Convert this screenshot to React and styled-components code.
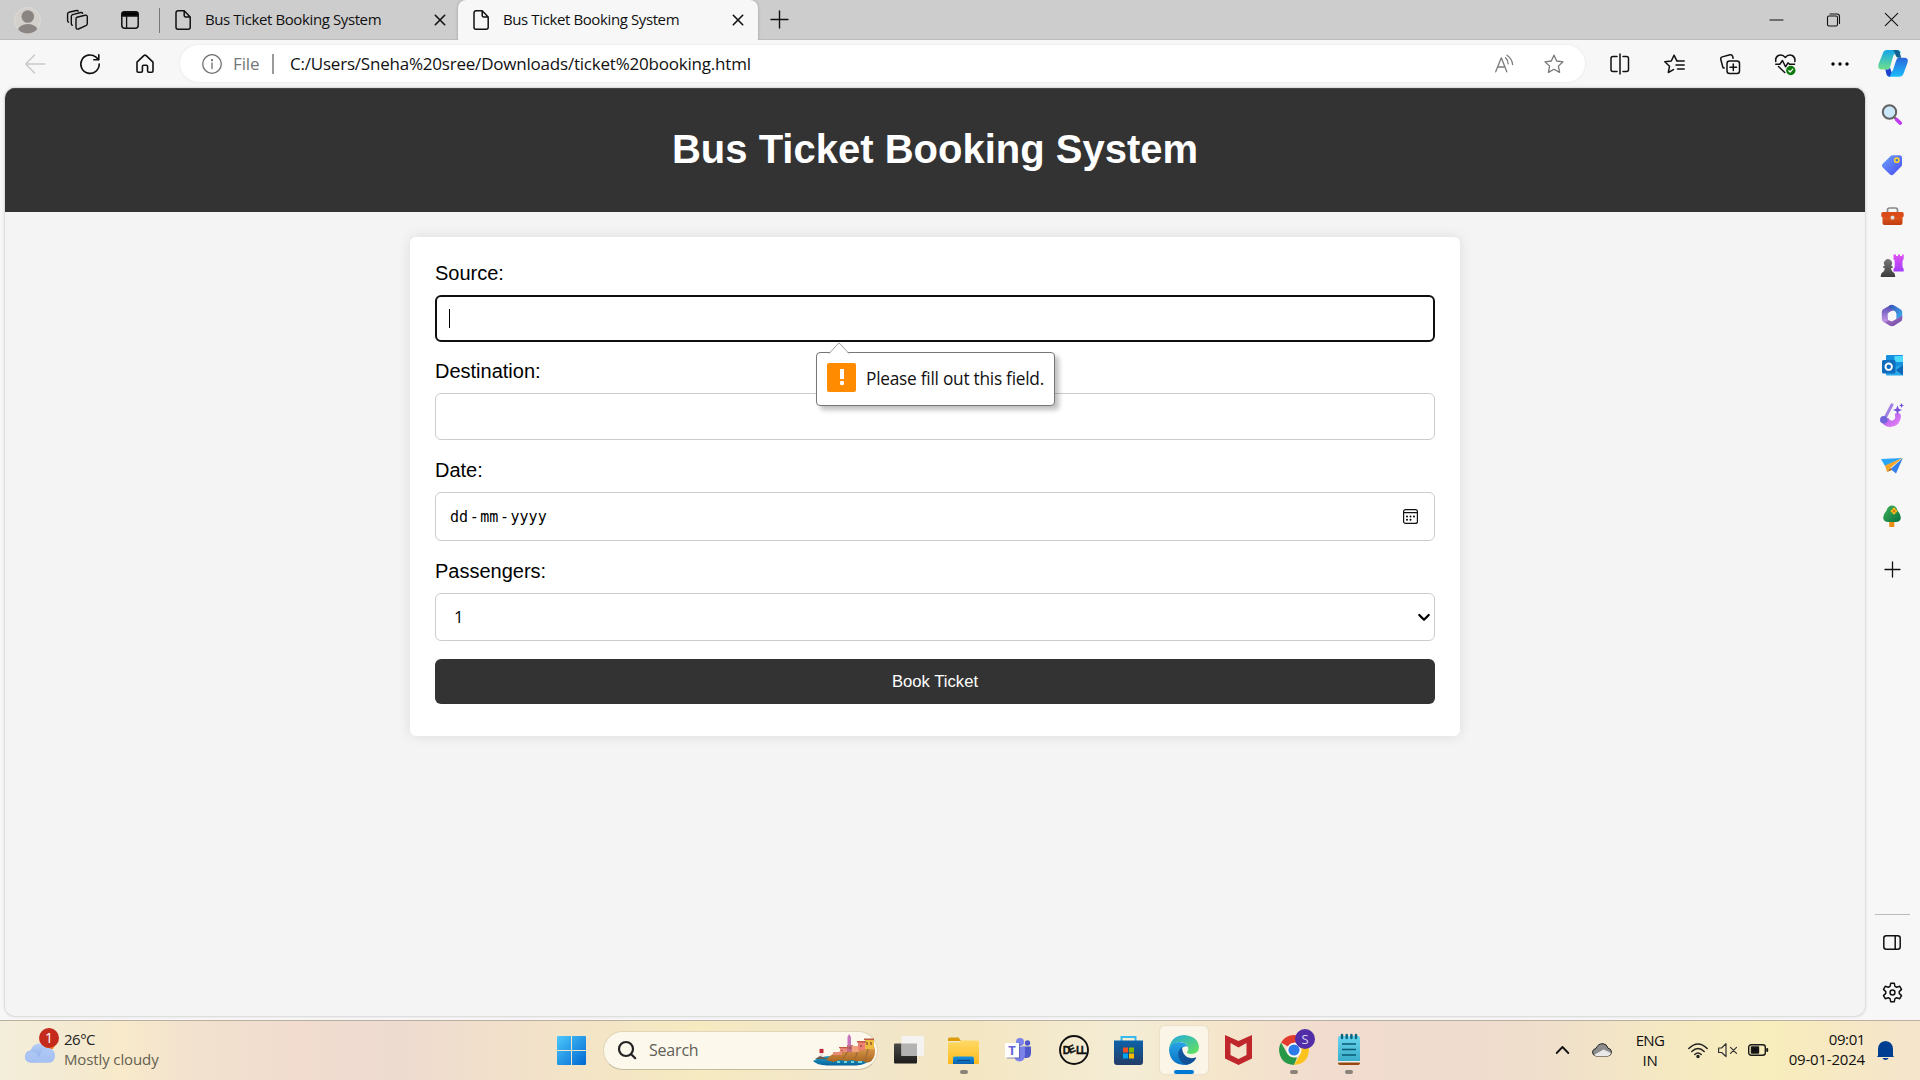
import React from "react";
import styled, { createGlobalStyle } from "styled-components";

const ui = `"Open Sans", "Noto Sans", sans-serif`;
const page = `"Liberation Sans", Arial, sans-serif`;

const Global = createGlobalStyle`
  * { box-sizing: border-box; }
  body { margin: 0; background: #f7f7f7; overflow: hidden; }
  svg { display: block; flex: none; overflow: visible; }
`;

const Screen = styled.div`
  width: 1920px;
  height: 1080px;
  display: flex;
  flex-direction: column;
  background: #f7f7f7;
  font-family: ${ui};
  color: #111;
`;

const Text = styled.span`
  white-space: nowrap;
  font-size: ${(p) => p.$size || 15}px;
  letter-spacing: ${(p) => p.$track || 0}px;
  color: ${(p) => p.$color || "inherit"};
  line-height: 20px;
`;

/* Tab strip */
const TabStrip = styled.div`
  height: 40px;
  display: flex;
  align-items: stretch;
  background: #cdcdcd;
  box-shadow: inset 0 -1px 0 #bdbdbd;
`;
const Cell = styled.div`
  width: ${(p) => p.$w}px;
  flex: none;
  display: flex;
  align-items: center;
  justify-content: center;
`;
const Divider = styled.div`
  width: ${(p) => p.$w || 1}px;
  height: ${(p) => p.$h}px;
  align-self: center;
  flex: none;
  background: ${(p) => p.$color || "#777"};
`;
const Tab = styled.div`
  width: ${(p) => p.$w}px;
  display: flex;
  align-items: center;
  padding: 0 ${(p) => p.$pr}px 1px 15px;
  border-radius: ${(p) => (p.$active ? "8px 8px 0 0" : "0")};
  background: ${(p) => (p.$active ? "#f7f7f7" : "transparent")};
  box-shadow: ${(p) => (p.$active ? "0 0 3px rgba(0,0,0,.25)" : "none")};
  clip-path: inset(0 -4px 0 -4px);
`;
const TabTitle = styled(Text)`
  flex: 1;
  margin-left: 14px;
  padding-bottom: 1px;
`;
const Spacer = styled.div`
  flex: 1;
`;

/* Toolbar */
const Toolbar = styled.div`
  height: 48px;
  display: flex;
  align-items: center;
  padding: 0 0 1px 7px;
`;
const AddressBar = styled.div`
  width: 1405px;
  height: 37px;
  margin: 0 7px 0 8px;
  padding: 0 6px 0 22px;
  display: flex;
  align-items: center;
  border-radius: 19px;
  background: #fff;
  box-shadow: 0 0 3px rgba(0, 0, 0, 0.08);
`;
const Scheme = styled.div`
  width: 50px;
  padding-left: 11px;
`;
const Url = styled(Text)`
  margin-left: 16px;
`;

/* Content */
const Middle = styled.div`
  height: 932px;
  display: flex;
  padding-left: 5px;
`;
const Viewport = styled.div`
  width: 1860px;
  height: 928px;
  border-radius: 10px;
  overflow: hidden;
  background: #f4f4f4;
  box-shadow: 0 0 2px 1px #d6d6d6;
  font-family: ${page};
`;
const Header = styled.header`
  height: 124px;
  display: flex;
  align-items: center;
  justify-content: center;
  background: #333;
  border-top: 1px solid #444;
`;
const Heading = styled.h1`
  margin: 0;
  padding-bottom: 4px;
  font-size: 40px;
  line-height: 46px;
  color: #fff;
`;
const Form = styled.form`
  width: 1050px;
  height: 499px;
  margin: 25px auto 0;
  padding: 25px;
  border-radius: 6px;
  background: #fff;
  box-shadow: 0 0 12.5px rgba(0, 0, 0, 0.1);
`;
const Group = styled.div`
  position: relative;
  margin-bottom: ${(p) => p.$mb}px;
`;
const Label = styled.label`
  display: block;
  height: 23px;
  margin-bottom: 10px;
  font-size: 20px;
  line-height: 23px;
  color: #000;
`;
const Field = styled.div`
  height: ${(p) => p.$h || 47}px;
  display: flex;
  align-items: center;
  border: ${(p) => (p.$focus ? "2px solid #101010" : "1px solid #ccc")};
  border-radius: 6px;
  padding: 0 ${(p) => p.$pr || 14}px 0 ${(p) => p.$pl || 13}px;
  justify-content: ${(p) => (p.$between ? "space-between" : "flex-start")};
  color: #000;
`;
const Caret = styled.div`
  width: 1px;
  height: 19px;
  margin-left: -1px;
  background: #000;
`;
const DateParts = styled.div`
  display: flex;
  gap: 1.6px;
  font: 15px/20px "DejaVu Sans Mono", monospace;
`;
const OptionText = styled(Text)`
  padding-bottom: 1px;
  font-family: ${ui};
`;
const Submit = styled.div`
  height: 45px;
  display: flex;
  align-items: center;
  justify-content: center;
  padding-top: 1px;
  border-radius: 6px;
  background: #333;
  color: #fff;
  font-size: 16.67px;
`;
const Bubble = styled.div`
  position: absolute;
  z-index: 2;
  left: 381px;
  top: 90px;
  width: 239px;
  height: 54px;
  display: flex;
  align-items: center;
  padding-left: 10px;
  background: #fff;
  border: 1px solid #767676;
  border-radius: 4px;
  box-shadow: 4px 4px 5px rgba(0, 0, 0, 0.25);
  font-family: ${ui};
`;
const BubbleTip = styled.svg`
  position: absolute;
  left: 12px;
  top: -11px;
`;
const Alert = styled.div`
  width: 29px;
  height: 29px;
  margin: -3px 10px 0 0;
  display: flex;
  align-items: center;
  justify-content: center;
  border-radius: 2px;
  background: #ff8c00;
`;

/* Sidebar */
const Sidebar = styled.aside`
  width: 55px;
  padding: 2px 1px 3px 0;
  display: flex;
  flex-direction: column;
  align-items: center;
`;
const SideCell = styled.div`
  width: 50px;
  height: ${(p) => p.$h || 50}px;
  padding-top: ${(p) => p.$pt || 0}px;
  flex: none;
  display: flex;
  align-items: center;
  justify-content: center;
`;
const SideRule = styled.div`
  width: 35px;
  height: 1px;
  margin-bottom: 2px;
  background: #bbb;
`;

/* Taskbar */
const Taskbar = styled.footer`
  height: 60px;
  display: flex;
  align-items: stretch;
  padding-bottom: 1px;
  border-top: 1px solid #b9afa2;
  background: linear-gradient(90deg, #f3eeda 0, #f4ead2 70px, #f8eaca 120px, #f2e2ce 185px, #f1dccf 300px, #eedbd0 400px, #f2e0cb 500px, #f5eac0 700px, #f2e6cc 850px, #f3e6c2 970px, #f4ecd5 1130px, #f5e6cb 1220px, #f1dccf 1320px, #f0dbcf 1450px, #efdfcb 1550px, #f5e9c2 1670px, #f8edbc 1770px, #f5e5ca 1900px);
`;
const Weather = styled.div`
  width: 543px;
  display: flex;
  padding-left: 25px;
`;
const Stack = styled.div`
  display: flex;
  flex-direction: column;
  justify-content: center;
  align-items: ${(p) => p.$align || "flex-start"};
  width: ${(p) => (p.$w ? p.$w + "px" : "auto")};
  margin-left: ${(p) => p.$ml || 0}px;
  padding-bottom: ${(p) => p.$pb || 0}px;
`;
const SearchBox = styled.div`
  width: 275px;
  height: 39px;
  align-self: center;
  margin: 0 3px;
  padding: 0 2px 0 14px;
  display: flex;
  align-items: center;
  gap: 13px;
  border-radius: 20px;
  background: #fcf8ec;
  border: 1px solid #e0d6b8;
  border-bottom-color: #c6bb9c;
`;
const TaskButton = styled.div`
  width: 55px;
  height: 58px;
  flex: none;
  position: relative;
  display: flex;
  align-items: center;
  justify-content: center;
`;
const Tile = styled.div`
  width: 48px;
  height: 48px;
  display: flex;
  align-items: center;
  justify-content: center;
  border-radius: 5px;
  background: #fbf5e8;
  box-shadow: 0 0 1px 1px #eadfca;
`;
const Running = styled.div`
  position: absolute;
  bottom: 5px;
  left: 50%;
  width: ${(p) => (p.$active ? 20 : 8)}px;
  height: 4px;
  transform: translateX(-50%);
  border-radius: 2px;
  background: ${(p) => (p.$active ? "#0078d4" : "#8b8378")};
`;
const Bell = styled(Cell)`
  margin-right: 15px;
`;

const Line = ({ w = 20, h = w, box, c = "#111", s = 1.5, children }) => (
  <svg width={w} height={h} viewBox={box || `0 0 ${w} ${h}`} fill="none" stroke={c} strokeWidth={s} strokeLinecap="round" strokeLinejoin="round">
    {children}
  </svg>
);
const Art = ({ w = 24, h = w, children }) => (
  <svg width={w} height={h} viewBox={`0 0 ${w} ${h}`}>{children}</svg>
);
const Grad = ({ id, a, b, v }) => (
  <linearGradient id={id} x1="0" y1="0" x2={v ? 0 : 1} y2="1">
    <stop offset="0" stopColor={a} />
    <stop offset="1" stopColor={b} />
  </linearGradient>
);

const FileIcon = () => (
  <Line w={16} h={20}>
    <path d="M3 .8h6.2L15.2 7v10.2a2 2 0 0 1-2 2H3a2 2 0 0 1-2-2V2.8a2 2 0 0 1 2-2zM9.2.8v4.7a1.5 1.5 0 0 0 1.500 1.500h4.500" />
  </Line>
);
const CloseIcon = () => (
  <Line w={10} s={1.6}><path d="m.3.3 9.400 9.400M9.700.3.3 9.700" /></Line>
);
const starPath = "M10 1.200 12.700 7l6.300.8-4.600 4.300 1.200 6.300L10 15.300l-5.600 3.100 1.200-6.300L1 7.800 7.300 7z";

function Tabs() {
  return (
    <TabStrip>
      <Cell $w={55}>
        <Art w={27}>
          <clipPath id="av"><circle cx="13.500" cy="13.500" r="13" /></clipPath>
          <circle cx="13.500" cy="13.500" r="13" fill="#d3d0cc" stroke="#dedbd7" />
          <circle cx="13.800" cy="9.500" r="6.300" fill="#8a8582" />
          <ellipse cx="13.800" cy="23.500" rx="10" ry="6.500" fill="#8a8582" clipPath="url(#av)" />
        </Art>
      </Cell>
      <Cell $w={45}>
        <Line w={21} h={20} s={1.4}>
          <path d="M10 7.200 18 5.200q2-.4 2.300 1.400v7.200q0 1.400-1.400 1.900l-7.500 3.300q-2.200.6-2.400-1.500V9q0-1.500 1-1.800z" />
          <path d="M5.300 15.200q-1-.2-1-1.500V6.500q0-1.400 1.300-1.900L13.800 2.500q1.500-.2 1.800.8M1.500 12.200q-.9-.4-.9-1.500V4q0-1.300 1.200-1.700L9.500.5q1.300-.2 1.700.6" />
        </Line>
      </Cell>
      <Cell $w={59}>
        <Line w={18}>
          <rect x=".8" y=".8" width="16.400" height="16.400" rx="3" />
          <path d="M1 3q0-2 2-2h12q2 0 2 2v2H1z" fill="#000" />
          <path d="M5.600 5.500V17" strokeWidth="1.300" />
        </Line>
      </Cell>
      <Divider $h={25} />
      <Tab $w={298} $pr={13}>
        <FileIcon />
        <TabTitle $track={-0.39}>Bus Ticket Booking System</TabTitle>
        <CloseIcon />
      </Tab>
      <Tab $w={300} $pr={15} $active>
        <FileIcon />
        <TabTitle $track={-0.39}>Bus Ticket Booking System</TabTitle>
        <CloseIcon />
      </Tab>
      <Cell $w={42}><Line w={17} h={18} s={1.4}><path d="M8.500 0v17M0 8.500h17" /></Line></Cell>
      <Spacer />
      <Cell $w={57}><Line w={13} s={1.2}><path d="M0 6h13" /></Line></Cell>
      <Cell $w={57}>
        <Line w={13} s={1.1}>
          <rect x=".5" y="2" width="10" height="10" rx="1.500" />
          <path d="M3 0h7q2.500 0 2.500 2.500v7" />
        </Line>
      </Cell>
      <Cell $w={58}><Line w={13} h={14} s={1.1}><path d="m.3.3 12.400 12.400M12.700.3.3 12.700" /></Line></Cell>
    </TabStrip>
  );
}

function Tools() {
  return (
    <Toolbar>
      <Cell $w={55}><Line w={20} c="#cacaca"><path d="M20 10H.8M9.500 1 .8 10l8.700 9" /></Line></Cell>
      <Cell $w={55}><Line w={20} s={1.600}><path d="M19.200 10A9.200 9.200 0 1 1 16 3.200L18.800 5.800M18.800.8v5h-5" /></Line></Cell>
      <Cell $w={55}><Line w={18} h={19} s={1.600}><path d="M1 8.200 7.800 1.700q1.200-1 2.400 0L17 8.200V17q0 1.200-1.200 1.200h-3q-1.200 0-1.200-1.200v-4.500q0-1.200-1.200-1.200H7.600q-1.200 0-1.200 1.200V17q0 1.200-1.200 1.200h-3Q1 18.200 1 17z" /></Line></Cell>
      <AddressBar>
        <Line w={20} c="#6e6e6e" s={1.3}>
          <circle cx="10" cy="10" r="9.300" /><path d="M10 9v5.500" /><circle cx="10" cy="6.200" r=".5" fill="#6e6e6e" />
        </Line>
        <Scheme><Text $size={17} $track={-0.1} $color="#767676">File</Text></Scheme>
        <Divider $w={2} $h={20} $color="#9a9a9a" />
        <Url $size={17} $track={-0.21}>C:/Users/Sneha%20sree/Downloads/ticket%20booking.html</Url>
        <Spacer />
        <Cell $w={50}>
          <Line w={19} h={18} c="#7b7b7b" s={1.3}>
            <path d="M.7 16.800 6.300 2.800l5.500 14M2.700 12h7.200M10.500 2.800q2.600 2.300 2.600 6M12 .2q5 3.500 5.600 9.300" />
          </Line>
        </Cell>
        <Cell $w={50}><Line w={20} c="#777" s={1.3}><path d={starPath} /></Line></Cell>
      </AddressBar>
      <Cell $w={55}>
        <Line w={20}>
          <path d="M7 2.500H3q-2 0-2 2v11q0 2 2 2h4M13 2.500h3.500q2 0 2 2v11q0 2-2 2H13M10 0v20" />
        </Line>
      </Cell>
      <Cell $w={55}>
        <Line w={21} h={20}>
          <path d="M13 7.200 10 1.200 7.300 7 .8 7.800l4.700 4.500-1.200 6.200L9.500 15.600M13.500 7h6.700M12 11h8.200M13.500 15h6.700" />
        </Line>
      </Cell>
      <Cell $w={55}>
        <Line w={20}>
          <rect x="7" y="7" width="12.500" height="12.500" rx="2.500" />
          <path d="M13.300 10v6.500M10 13.300h6.500M4.200 14 3 13.700 .8 5.500q-.5-2 1.500-2.600L10 .8q2-.5 2.600 1.400l.5 2" />
        </Line>
      </Cell>
      <Cell $w={56}>
        <Line w={21} h={20}>
          <path d="M.8 7.500q-.8-4 2.500-6 4.200-1.500 7 2 2.800-3.500 7-2 3.300 2 2.500 6M.8 10.300h4l2.700-3.800 3 6.300 2.500-4 1.500 1.500h5M3.500 12.500l6.200 6" />
          <circle cx="15.800" cy="16.500" r="4.700" fill="#0e7a0d" stroke="none" />
          <path d="m13.800 16.700 1.400 1.300 2.600-2.800" stroke="#fff" strokeWidth="1.200" />
        </Line>
      </Cell>
      <Cell $w={54}><Art w={18} h={4}><circle cx="2" cy="2" r="1.700" /><circle cx="9" cy="2" r="1.700" /><circle cx="16" cy="2" r="1.700" /></Art></Cell>
      <Cell $w={51}>
        <Art w={30} h={27}>
          <Grad id="c1" a="#13a6ea" b="#6ee08a" v />
          <Grad id="c2" a="#2a66dc" b="#1bbdf9" v />
          <path d="M19 0H9Q6 0 5 3L.6 14Q-1 19.500 4 19.500H9q2.500 0 3.200-3L15.300 6q1-3 5-3h2.500Q22.500 0 19 0z" fill="url(#c1)" />
          <path d="M11.500 26.700H21q3.500 0 4.500-3l4-11q1.500-5-3.500-5h-5q-2.200 0-3 3L15 20q-.8 2.600-3.500 2.600H8q.5 4.100 3.500 4.100z" fill="url(#c2)" />
          <path d="M15 0h3.500q2.600 0 3.400 3l1.300 4.700h-2.700q-2.200 0-2.800-2.200L16.500 2z" fill="#12618f" />
          <path d="M7.200 19.500H9.500q2 0 2.500-2l1.500 4.500-1.500 4.700q-2.600 0-3.500-3z" fill="#1d43cf" />
        </Art>
      </Cell>
    </Toolbar>
  );
}

function Booking() {
  return (
    <Viewport>
      <Header><Heading>Bus Ticket Booking System</Heading></Header>
      <Form>
        <Group $mb={18}>
          <Label>Source:</Label>
          <Field $focus><Caret /></Field>
          <Bubble>
            <BubbleTip width="20" height="12" viewBox="0 0 20 12">
              <path d="M0 12 10 .8 20 12z" fill="#fff" />
              <path d="M0 11.500 10 .8l10 10.700" fill="none" stroke="#a0a0a0" />
            </BubbleTip>
            <Alert>
              <Art w={6} h={17}><rect x="1" y="0" width="4" height="10" fill="#fff" /><circle cx="3" cy="14" r="2.200" fill="#fff" /></Art>
            </Alert>
            <Text $size={17.3} $track={-0.25}>Please fill out this field.</Text>
          </Bubble>
        </Group>
        <Group $mb={19}><Label>Destination:</Label><Field /></Group>
        <Group $mb={19}>
          <Label>Date:</Label>
          <Field $h={49} $between $pr={16} $pl={14}>
            <DateParts><span>dd</span><span>-</span><span>mm</span><span>-</span><span>yyyy</span></DateParts>
            <Line w={15} s={1.2}>
              <rect x=".6" y=".6" width="13.800" height="13.800" rx="2" /><path d="M.6 3.700h13.800" />
              <g fill="#000" stroke="none">
                <circle cx="4" cy="7.500" r="1" /><circle cx="7.500" cy="7.500" r="1" /><circle cx="11" cy="7.500" r="1" /><circle cx="4" cy="10.800" r="1" /><circle cx="7.500" cy="10.800" r="1" />
              </g>
            </Line>
          </Field>
        </Group>
        <Group $mb={18}>
          <Label>Passengers:</Label>
          <Field $h={48} $between $pl={18} $pr={4}>
            <OptionText $size={16.7}>1</OptionText>
            <Line w={12} h={7} s={2.3} c="#000"><path d="m1.300 1 4.700 4.700L10.700 1" /></Line>
          </Field>
        </Group>
        <Submit>Book Ticket</Submit>
      </Form>
    </Viewport>
  );
}

function Side() {
  return (
    <Sidebar>
      <SideCell>
        <Art w={22}>
          <path d="m13.500 13.500 2 2" stroke="#555" strokeWidth="2" />
          <path d="m15.500 15.500 3.800 3.600" stroke="#c13cf0" strokeWidth="3.600" strokeLinecap="round" />
          <circle cx="8.500" cy="8" r="6.700" fill="#cbe8fb" stroke="#626262" strokeWidth="2" />
        </Art>
      </SideCell>
      <SideCell>
        <Art w={22}>
          <Grad id="tag" a="#6fa5fa" b="#4648f2" />
          <path d="M11.500 1.200h7q2.500 0 2.500 2.500v7q0 1-.8 1.800l-7.800 8q-1.700 1.500-3.400 0L1.500 13.300q-1.300-1.700 0-3.400L9.700 2q.8-.8 1.800-.8z" fill="url(#tag)" />
          <circle cx="15.800" cy="6.200" r="2.100" fill="#3c76d8" stroke="#ffd22e" strokeWidth="1.600" />
        </Art>
      </SideCell>
      <SideCell $pt={2}>
        <Art w={23} h={19}>
          <Grad id="tool" a="#e95e20" b="#bf3c0f" v />
          <path d="M6.500 6V3q0-2 2-2h6q2 0 2 2v3" fill="none" stroke="#888" strokeWidth="1.700" />
          <path d="M1.500 8h20v8q0 2-2 2h-16q-2 0-2-2z" fill="url(#tool)" />
          <path d="M2 5h19q1.700 0 1.700 1.700v2q0 1.600-1.700 1.600H2Q.3 10.300.3 8.700v-2Q.3 5 2 5z" fill="#db4b17" />
          <rect x="9.700" y="8.800" width="3.600" height="3.800" rx="1" fill="#ddd" />
        </Art>
      </SideCell>
      <SideCell $pt={1}>
        <Art w={24} h={24}>
          <Grad id="rook" a="#df53f2" b="#a33dfa" v /><Grad id="pawn" a="#777" b="#3c3c3c" v />
          <path d="M14 .5h2V2h2V.5h2V2h2V.5h1.700V5q-1.200 1-1.200 2.500V13l1.200 2v2.500H13.500V15l1.200-2V7.500Q14.700 6 13.500 5V.5z" fill="url(#rook)" />
          <path d="M.8 23v-1.500q0-2.500 2.800-4 1-1.500 1.300-3.500H3.200v-1.500l1.600-1a4 4 0 1 1 6.400 0l1.500 1V14H11q.3 2 1.300 3.500 2.800 1.500 2.800 4V23z" fill="url(#pawn)" />
        </Art>
      </SideCell>
      <SideCell $pt={1}>
        <Art w={22} h={23}>
          <Grad id="m1" a="#5148b0" b="#c99ae8" v /><Grad id="m2" a="#3a52b8" b="#3bb7f3" /><Grad id="m3" a="#b77bd6" b="#6c48a0" />
          <path d="M10 .8 2.200 5.300Q.8 6.200.8 8v7q0 2 1.500 2.800 3 1.200 4.700-1.300V11q0-1.500 1.300-2.400L13 6z" fill="url(#m1)" />
          <path d="M8.500 1.500q2.500-1.600 4.800 0l6.200 3.800q1.700 1 1.700 2.700v6q0 2-1.700 3-3.500-.5-4.300-3V9.500q0-1.500-1.200-2.200L9 4.500Q7.500 3 8.500 1.500z" fill="url(#m2)" />
          <path d="M2 17.600q3 .9 5-1.600l4 1.500 6-3.500q3-1 4.200-3v4q0 1.700-1.500 2.600L13.500 21.500q-2.500 1.300-5 0z" fill="url(#m3)" />
          <path d="m11 7.300 3.800 2.200v4.200L11 16l-3.800-2.300V9.500z" fill="#f7f7f7" stroke="#f7f7f7" strokeLinejoin="round" />
        </Art>
      </SideCell>
      <SideCell>
        <Art w={21}>
          <path d="M5 0h15q1 0 1 1v13H4V1q0-1 1-1z" fill="#1490df" /><path d="M12.500 1H21v6h-8.500z" fill="#50d9ff" /><path d="M4 20V14l8.500-2L21 10v9.500q0 1-1 1H5z" fill="#28a8ea" /><path d="m21 10-7 5 7 5.500z" fill="#0d67b6" />
          <rect y="5" width="13.500" height="13.500" rx="1.500" fill="#0f6cbd" /><circle cx="6.700" cy="11.700" r="3.200" fill="none" stroke="#fff" strokeWidth="1.900" />
        </Art>
      </SideCell>
      <SideCell>
        <Art w={24} h={24}>
          <Grad id="des" a="#a24bf0" b="#ee8af4" />
          <path d="M1.500 17q1 7 9 7Q20.500 23 21 13q-.3-2.500-2.500-3-2.300-.2-3.700 1 1.700 5-2 6.500-3 .8-4.300-2.500z" fill="url(#des)" />
          <path d="M12 1.800 5 15" stroke="#a583e4" strokeWidth="3" strokeLinecap="round" /><circle cx="3.800" cy="16.800" r="3.800" fill="#7164d9" />
          <path d="m17.500 2.500 1.300 3.200L22 7l-3.200 1.300-1.300 3.200-1.300-3.200L13 7l3.200-1.300zM21.500 0l.8 1.800 1.700.8-1.700.7-.8 1.800-.7-1.800-1.800-.7 1.800-.8z" fill="#7850dc" />
        </Art>
      </SideCell>
      <SideCell>
        <Art w={22} h={17}>
          <path d="M0 2 21.500 1 4 9z" fill="#2ba5f5" /><path d="M21.800 1 15 16.500 9.500 12z" fill="#3280eb" /><path d="M4 8.500 21.500 1 9.500 10.800 6 15z" fill="#f4a62a" /><path d="m6 15 3.500-4 1.500 2z" fill="#b5640d" />
        </Art>
      </SideCell>
      <SideCell $pt={2}>
        <Art w={18} h={22}>
          <Grad id="tree" a="#44b35a" b="#067040" />
          <rect x="6.300" y="15" width="5" height="7" fill="#e98d14" /><path d="M9 .5q4 0 5.500 5Q18 9.500 17.800 13q-.5 4-5 4H5.200q-4.500 0-5-4Q0 9.500 3.500 5.500 5 .5 9 .5z" fill="url(#tree)" />
          <g fill="#ffb81a"><circle cx="9.300" cy="6" r="1.600" /><circle cx="12.700" cy="6" r="1.600" /><circle cx="11" cy="4.200" r="1.600" /><circle cx="11" cy="7.800" r="1.600" /></g><circle cx="11" cy="6" r="1" fill="#d95e0c" />
        </Art>
      </SideCell>
      <SideCell $h={58}><Line w={15} s={1.3}><path d="M7.500 0v15M0 7.500h15" /></Line></SideCell>
      <Spacer />
      <SideRule />
      <SideCell>
        <Line w={18} h={15}><rect x=".8" y=".8" width="16.400" height="13.400" rx="2.500" /><path d="M12.200 1v13" /></Line>
      </SideCell>
      <SideCell>
        <Line w={21} box="0 0 24 24" s={1.700}>
          <path d="M10 1.300h4l.8 3.600 2 1.100 3.500-1.100 2 3.500L19.700 11v2l2.600 2.600-2 3.500-3.500-1.100-2 1.100-.8 3.600h-4l-.8-3.600-2-1.100-3.500 1.100-2-3.500L4.300 13v-2L1.700 8.400l2-3.500L7.200 6l2-1.100z" />
          <circle cx="12" cy="12" r="2.800" />
        </Line>
      </SideCell>
    </Sidebar>
  );
}

function Bottom() {
  return (
    <Taskbar>
      <Weather>
        <Art w={34} h={50}>
          <Grad id="wc" a="#b9d0f6" b="#7fa3e8" v />
          <circle cx="24" cy="23" r="6" fill="#f57c14" />
          <path d="M5.500 41.500Q0 41 0 35.500q.5-5.500 5.500-6Q8 22.500 14.500 22.500q4.500.5 6.500 4.500 8-1 9 7.500-.5 6.500-6 7z" fill="url(#wc)" />
          <path d="M5.500 41.500Q0 41 0 35.500q2-5.500 7.500-5 6 1.500 6.500 6l2-5q3-5 7-4.500 6.500 1 7 7.500-.5 6.500-6 7z" fill="#b2caf6" opacity=".75" />
          <circle cx="24" cy="17" r="10" fill="#c42b1c" />
          <text x="24" y="22" fontFamily="Open Sans" fontSize="14" fill="#fff" textAnchor="middle">1</text>
        </Art>
        <Stack $ml={5} $pb={3}>
          <Text $track={-0.5} $color="#222">26°C</Text>
          <Text $track={-0.12} $color="#65604f">Mostly cloudy</Text>
        </Stack>
      </Weather>
      <Cell $w={57}>
        <Art w={29}>
          <Grad id="win" a="#4cc9fb" b="#0067d2" />
          <path d="M0 1q0-1 1-1h13v14H0zM15 0h13q1 0 1 1v13H15zM0 15h14v14H1q-1 0-1-1zM15 15h14v13q0 1-1 1H15z" fill="url(#win)" />
        </Art>
      </Cell>
      <SearchBox>
        <Line w={18} s={2.200} c="#222"><circle cx="8" cy="8" r="7" /><path d="m13.200 13.200 4 4" /></Line>
        <Text $size={16} $track={-0.2} $color="#625f57">Search</Text>
        <Spacer />
        <Art w={62} h={32}>
          <Grad id="sea" a="#1fa0c4" b="#07639c" v /><Grad id="rock" a="#dc9c50" b="#a8641f" v />
          <path d="M0 27q8-5 18-5h42q-5 9-17 9.500H14Q4 31 0 27z" fill="url(#sea)" />
          <path d="M13 26q6-8 17-9l16-4h15.500q2 8-3 14-5 3-8 0l-5 1-6-2-6 1-7-1-6 2z" fill="url(#rock)" />
          <path d="M30 25 35 17M42 25l3-9M52 26l3-11" stroke="#a06a35" strokeWidth="1.200" />
          <path d="M20 18h9v3h-9zM27 13h8v5h-8z" fill="#ea8b7a" /><path d="M34 11h6v7h-6z" fill="#c76d81" /><path d="M39 12h7v6h-7z" fill="#f1a17d" /><path d="M45 8h7v8h-7z" fill="#ef7f75" /><path d="M52 5h9v10h-9z" fill="#efbb3e" />
          <path d="M34.500 11V3l1.500-3 2 3v8z" fill="#c775bd" />
          <path d="M44 7h9v1.500h-9zM51 4.500h10V6H51zM26 13h9v1.200h-9z" fill="#c05a40" />
          <path d="M54 8v3M58 8v3M48 11v2M29 16v1M37 13v2" stroke="#825030" strokeWidth="1.300" />
          <path d="M7 24V14h3v10z" fill="#e8e2e0" /><path d="M6.500 15h4v4h-4z" fill="#c22b35" /><path d="m2 25 5-3 8 3z" fill="#735a4e" />
          <path d="M24 28h3M31 28h3M38 28h3M45 28h4" stroke="#6cd3e1" strokeWidth="2" />
        </Art>
      </SearchBox>
      <TaskButton>
        <Art w={30} h={28}>
          <Grad id="tv" a="#4a4a48" b="#1d1d1c" v />
          <rect y="7.500" width="23" height="20" rx="1" fill="url(#tv)" /><rect x="7.500" width="22.500" height="20" rx="1" fill="#f4f3f2" /><path d="M7.500 7.500H23V20H7.500z" fill="#b3b3b3" />
        </Art>
      </TaskButton>
      <TaskButton>
        <Art w={31} h={27}>
          <Grad id="fold" a="#ffd966" b="#fdbb1c" v /><Grad id="fb" a="#1493df" b="#0961b0" v />
          <path d="M0 2q0-1.500 1.500-1.500h9L13 4H0z" fill="#dc9d06" />
          <path d="M0 5.500h11L13 3.500h16.500q1.500 0 1.500 1.500v21q0 1-1 1H1q-1 0-1-1z" fill="url(#fold)" />
          <path d="M5 27v-5.500q0-2 2-2h17q2 0 2 2V27z" fill="url(#fb)" /><path d="M9 23.500h13" stroke="#0b4c85" strokeWidth="1.200" />
        </Art>
        <Running />
      </TaskButton>
      <TaskButton>
        <Art w={27} h={24}>
          <circle cx="22.500" cy="5" r="2.700" fill="#5059c9" /><circle cx="15" cy="4" r="4" fill="#7b83eb" />
          <path d="M18 8.500h8v7q-.4 4.500-5 4.500h-3z" fill="#5059c9" /><path d="M9 8.500h11V17q-.5 6.500-5.500 6.500Q9 23 9 17z" fill="#7b83eb" />
          <path d="M2 6h13v14.500H2z" fill="#3f458f" opacity=".55" /><rect y="5" width="14" height="14.500" fill="#fff" />
          <text x="7" y="16.700" fontFamily="Open Sans" fontWeight="700" fontSize="13" fill="#6264d8" textAnchor="middle">T</text>
        </Art>
      </TaskButton>
      <TaskButton>
        <Art w={30}>
          <circle cx="15" cy="15" r="14" fill="none" stroke="#111" strokeWidth="1.900" />
          <text fontFamily="Liberation Sans" fontWeight="700" fontSize="10.500" fill="#111" stroke="#111" strokeWidth=".3">
            <tspan x="3.800" y="18.800">D</tspan>
            <tspan x="11" y="18.800" rotate="-25">E</tspan>
            <tspan x="17" y="18.800">L</tspan>
            <tspan x="21.800" y="18.800">L</tspan>
          </text>
        </Art>
      </TaskButton>
      <TaskButton>
        <Art w={29} h={29}>
          <Grad id="st" a="#0c62a8" b="#233c68" v />
          <path d="M7.500 6V1h14v5" fill="none" stroke="#35b9ee" strokeWidth="2" /><path d="M0 4.500h29V26q0 3-3 3H3q-3 0-3-3z" fill="url(#st)" />
          <path d="M9 11.500h5v5H9z" fill="#f25022" /><path d="M15 11.500h5v5h-5z" fill="#7fba00" /><path d="M9 17.500h5v5H9z" fill="#00a4ef" /><path d="M15 17.500h5v5h-5z" fill="#ffb900" />
        </Art>
      </TaskButton>
      <TaskButton>
        <Tile>
          <Art w={30}>
            <Grad id="e1" a="#23a6e4" b="#65e655" /><Grad id="e2" a="#28a4e6" b="#0873c4" v /><Grad id="e3" a="#115ca7" b="#114a8b" />
            <path d="M0 15Q1 1 15 0q14 1 15 12 0 7-8 7-4-.2-4-2 2-2 1-5-2-5-9-5Q3 8 0 15z" fill="url(#e1)" />
            <path d="M0 15q2-7.500 10-8 7 .2 9 5-4-2-6.500 2-2 5 2 9.500 5 4.500 12 1Q22 30 15 30 1 29 0 15z" fill="url(#e2)" />
            <path d="M13 12q-5 4-3.500 10 2 6 7.500 7.800 6-.8 10-6.300.7-1.400-.7-1-4.300 1.500-8.300-.5-5-3.500-5-10z" fill="url(#e3)" />
          </Art>
        </Tile>
        <Running $active />
      </TaskButton>
      <TaskButton>
        <Art w={27} h={30}>
          <path d="m0 0 13.500 6L27 0v23.500L13.500 30 0 23.500zm5.500 8v12l8 4 8-4V8l-8 4.500z" fill="#c0272d" fillRule="evenodd" />
        </Art>
      </TaskButton>
      <TaskButton>
        <Art w={30}>
          <path d="M15 15 2 7.500Q6.500 0 15 0t13 7.500H15z" fill="#e33b2e" />
          <path d="M2 7.500 8.500 19q2.500 3.500 6.500 3.500h3L15 30Q1 29 0 15q0-4 2-7.500z" fill="#279847" /><path d="M28 7.500q2 3.500 2 7.500Q29 29 15 30l6.500-11.200Q24 14 21 9V7.500z" fill="#fcc31e" />
          <circle cx="15" cy="15" r="7.200" fill="#fff" /><circle cx="15" cy="15" r="5.600" fill="#2d7bea" />
          <circle cx="26" cy="4" r="10" fill="#512da8" /><text x="26" y="8.700" fontFamily="Open Sans" fontSize="13" fill="#ddd5f0" textAnchor="middle">S</text>
        </Art>
        <Running />
      </TaskButton>
      <TaskButton>
        <Art w={22} h={30}>
          <Grad id="np" a="#6ad6ee" b="#37abc8" v />
          <path d="M0 26h22v2q0 2-2 2H2q-2 0-2-2z" fill="#97480f" /><path d="M0 3q0-2 2-2h18q2 0 2 2v24H0z" fill="url(#np)" /><path d="M0 26h22v1.500H0z" fill="#eee" />
          <path d="M4 9h14M4 14.500h14M4 20h14" stroke="#0a5974" strokeWidth="1.500" />
          <path d="M4 0v3M8.700 0v3M13.400 0v3M18 0v3" stroke="#0b6683" strokeWidth="2.500" strokeLinecap="round" />
        </Art>
        <Running />
      </TaskButton>
      <Spacer />
      <Cell $w={40}><Line w={13} h={8} s={1.8}><path d="m.7 7 5.800-6 5.800 6" /></Line></Cell>
      <Cell $w={40}>
        <Art w={20} h={14}>
          <path d="M4 13q-3.500-.6-3.500-4 .4-3 3.500-3.500Q6 .5 11 .7q4 .5 5 4.500 3.400.4 3.500 4-.3 3.500-3.500 3.800z" fill="#8d8d8d" stroke="#222" />
          <path d="M2 12 11.500 6.500 19 10q-.6 2.700-3 3H4z" fill="#e8e8e8" />
        </Art>
      </Cell>
      <Stack $w={56} $align="center"><Text $track={-0.6}>ENG</Text><Text $track={-0.3}>IN</Text></Stack>
      <Cell $w={39}>
        <Line w={20} h={15} s={1.5} c="#222"><path d="M.8 5.500Q10-3.500 19.200 5.500M3.800 8.500q6.200-6 12.400 0M6.800 11.500q3.200-3 6.400 0" /><circle cx="10" cy="13.500" r="1" fill="#222" /></Line>
      </Cell>
      <Cell $w={21}>
        <Line w={19} h={14} s={1.2} c="#333"><path d="M.6 5v4.500h3L8 13.500V.6L3.600 5zM12.500 4.300l6 6M18.500 4.300l-6 6" /></Line>
      </Cell>
      <Cell $w={40}>
        <Line w={21} h={12} s={1.400} c="#1a1a1a"><rect x=".7" y=".7" width="16.600" height="10.600" rx="2.500" /><rect x="3.500" y="3" width="7" height="6" fill="#111" /><path d="M19.200 5v2" strokeWidth="2" /></Line>
      </Cell>
      <Stack $w={87} $align="flex-end" $pb={3}><Text $track={-0.4}>09:01</Text><Text $track={-0.2}>09-01-2024</Text></Stack>
      <Bell $w={40}>
        <Art w={17} h={19}><path d="M1 14.500V8q.5-7.500 7.500-8 7 .5 7.500 8v6.500l1 1.500H0zM5.500 17h6q-.6 2-3 2t-3-2z" fill="#003e92" /></Art>
      </Bell>
    </Taskbar>
  );
}

export default function App() {
  return (
    <Screen>
      <Global />
      <Tabs />
      <Tools />
      <Middle>
        <Booking />
        <Side />
      </Middle>
      <Bottom />
    </Screen>
  );
}
